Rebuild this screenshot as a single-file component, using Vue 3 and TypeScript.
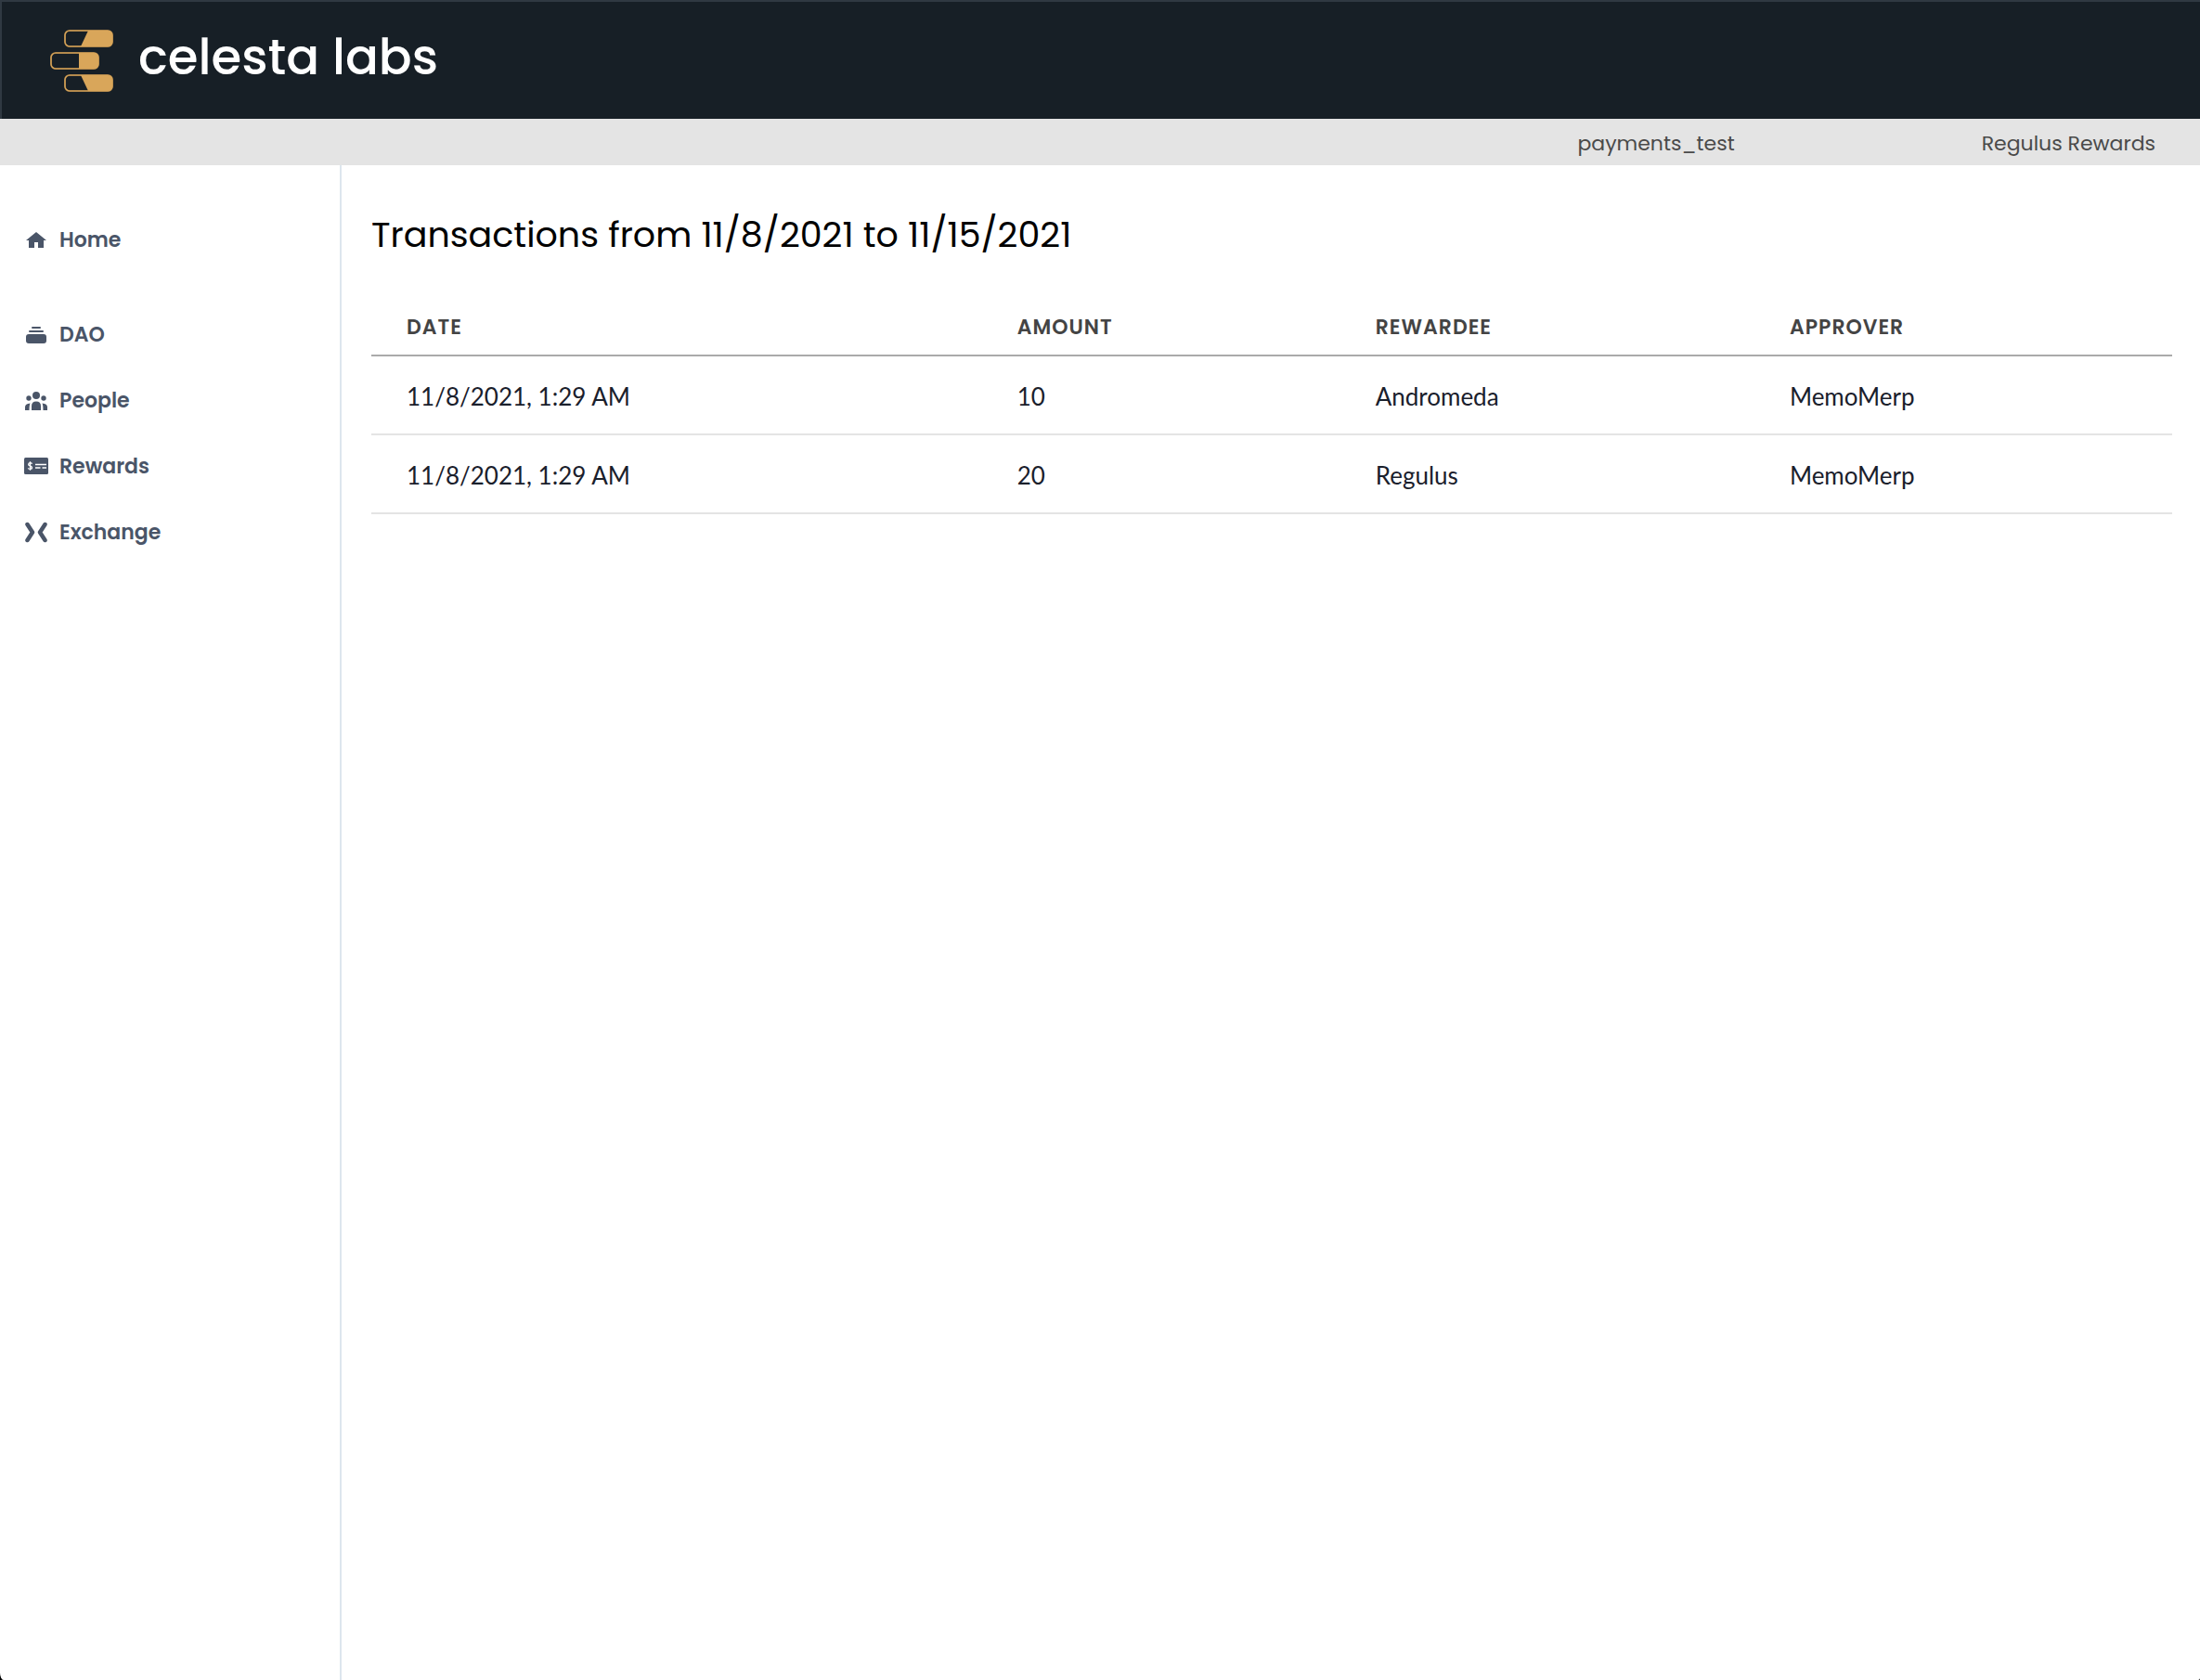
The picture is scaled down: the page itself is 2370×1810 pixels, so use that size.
<script setup lang="ts">
interface NavItem {
  label: string
  icon: 'home' | 'dao' | 'people' | 'rewards' | 'exchange'
}

interface Transaction {
  date: string
  amount: number
  rewardee: string
  approver: string
}

const navItems: NavItem[] = [
  { label: 'Home', icon: 'home' },
  { label: 'DAO', icon: 'dao' },
  { label: 'People', icon: 'people' },
  { label: 'Rewards', icon: 'rewards' },
  { label: 'Exchange', icon: 'exchange' },
]

const transactions: Transaction[] = [
  { date: '11/8/2021, 1:29 AM', amount: 10, rewardee: 'Andromeda', approver: 'MemoMerp' },
  { date: '11/8/2021, 1:29 AM', amount: 20, rewardee: 'Regulus', approver: 'MemoMerp' },
]
</script>

<template>
  <div class="app">
    <header class="topbar">
      <a href="#" class="brand">
        <svg class="logo" width="70" height="68" viewBox="0 0 70 68" aria-hidden="true">
          <g fill="none" stroke="#8f6f40" stroke-width="2">
            <rect x="17" y="1" width="51" height="17" rx="5" />
            <rect x="2" y="25" width="51" height="17" rx="5" />
            <rect x="17" y="49" width="51" height="17" rx="5" />
          </g>
          <g fill="#d9a65a">
            <path d="M42 1H63Q68 1 68 6V13Q68 18 63 18H34Z" />
            <path d="M32 25H48Q53 25 53 30V37Q53 42 48 42H32Z" />
            <path d="M34 49H63Q68 49 68 54V61Q68 66 63 66H42Z" />
          </g>
          <g fill="none" stroke="#d9a65a" stroke-width="1.200">
            <rect x="17" y="1" width="51" height="17" rx="5" />
            <rect x="2" y="25" width="51" height="17" rx="5" />
            <rect x="17" y="49" width="51" height="17" rx="5" />
          </g>
        </svg>
        <span class="brand-name">celesta labs</span>
      </a>
    </header>

    <div class="context">
      <span>payments_test</span>
      <span>Regulus Rewards</span>
    </div>

    <div class="body">
      <nav class="sidebar">
        <a v-for="item in navItems" :key="item.label" href="#" class="nav-link" :class="item.icon">
          <svg class="nav-icon" width="26" height="24" viewBox="0 0 26 24" fill="currentColor" aria-hidden="true">
            <path v-if="item.icon === 'home'" d="M13 3L24 12H21V20H15V14H11V20H5V12H2Z" />
            <template v-else-if="item.icon === 'dao'">
              <rect x="8" y="3" width="10" height="2" rx="1" />
              <rect x="5" y="7" width="16" height="2" rx="1" />
              <rect x="2" y="11" width="22" height="10" rx="3" />
            </template>
            <template v-else-if="item.icon === 'people'">
              <circle cx="13" cy="6" r="4" />
              <circle cx="5" cy="9" r="2.7" />
              <circle cx="21" cy="9" r="2.7" />
              <path d="M8 22V17.500Q8 12.500 13 12.500T18 17.500V22Z" />
              <path d="M1 22V18.500Q1 15 6.500 14.500Q5.500 16.500 5.500 22Z" />
              <path d="M25 22V18.500Q25 15 19.500 14.500Q20.500 16.500 20.500 22Z" />
            </template>
            <template v-else-if="item.icon === 'rewards'">
              <rect x="0" y="2" width="26" height="18" rx="1.500" />
              <g fill="none" stroke="#fff" stroke-width="1.300">
                <path d="M8.500 8.700Q8 7.600 6.500 7.600T4.600 9.300Q4.600 10.500 6.500 11T8.500 12.800Q8.500 14.400 6.500 14.400T4.400 13.200M6.500 6.300V15.700" />
                <path d="M12 9.500H24M12 13H17.500M19.500 13H24" />
              </g>
            </template>
            <path
              v-else
              d="M3.500 3L9 11.500L3.500 20M22.500 3L17 11.500L22.500 20"
              fill="none"
              stroke="currentColor"
              stroke-width="4.500"
              stroke-linecap="round"
              stroke-linejoin="round"
            />
          </svg>
          <span>{{ item.label }}</span>
        </a>
      </nav>

      <main class="content">
        <h1>Transactions from 11/8/2021 to 11/15/2021</h1>
        <table>
          <colgroup>
            <col class="col-date" />
            <col class="col-amount" />
            <col class="col-rewardee" />
            <col />
          </colgroup>
          <thead>
            <tr>
              <th scope="col">DATE</th>
              <th scope="col">AMOUNT</th>
              <th scope="col">REWARDEE</th>
              <th scope="col">APPROVER</th>
            </tr>
          </thead>
          <tbody>
            <tr v-for="(tx, i) in transactions" :key="i">
              <td>{{ tx.date }}</td>
              <td>{{ tx.amount }}</td>
              <td>{{ tx.rewardee }}</td>
              <td>{{ tx.approver }}</td>
            </tr>
          </tbody>
        </table>
      </main>
    </div>
  </div>
</template>

<style>
html {
  background: #000;
}
</style>

<style scoped>
.app {
  box-sizing: border-box;
  min-height: 100vh;
  display: flex;
  flex-direction: column;
  background: #fff;
  border-radius: 0 0 2px 4px / 0 0 2px 8px;
  overflow: hidden;
  font-family: Poppins, Inter, "Open Sans", sans-serif;
  text-rendering: optimizeLegibility;
}

.topbar {
  box-sizing: border-box;
  height: 128px;
  padding: 2px 51px 0;
  display: flex;
  align-items: center;
  background: #171f26;
  border-top: 2px solid #303942;
  border-left: 2px solid #303942;
}

.brand {
  display: flex;
  align-items: center;
  gap: 26px;
  color: #fff;
  text-decoration: none;
}

.brand-name {
  font-size: 53px;
  line-height: 64px;
  font-weight: 500;
  padding-bottom: 8px;
}

.context {
  display: flex;
  justify-content: flex-end;
  gap: 266px;
  padding: 12px 48px 8px;
  background: #e4e4e4;
  color: #4a4a4a;
  font-size: 22px;
  line-height: 30px;
}

.body {
  flex: 1;
  display: flex;
}

.sidebar {
  box-sizing: border-box;
  width: 368px;
  flex: none;
  display: flex;
  flex-direction: column;
  gap: 43px;
  padding: 67px 26px;
  border-right: 2px solid #dde6ee;
}

.nav-link {
  display: flex;
  align-items: center;
  gap: 12px;
  color: #4a5568;
  font-size: 22px;
  line-height: 28px;
  font-weight: 600;
  text-decoration: none;
}

.nav-link.home {
  margin-bottom: 31px;
}

.content {
  flex: 1;
  padding: 45px 30px 44px 32px;
}

h1 {
  margin: 0 0 48px;
  color: #000;
  font-size: 38px;
  line-height: 60px;
  font-weight: 400;
}

table {
  width: 100%;
  table-layout: fixed;
  border-collapse: separate;
  border-spacing: 0;
}

.col-date {
  width: 33.9%;
}

.col-amount {
  width: 19.9%;
}

.col-rewardee {
  width: 23%;
}

th,
td {
  padding: 0 38px;
  text-align: left;
}

th {
  padding-top: 4px;
  padding-bottom: 11px;
  border-bottom: 2px solid #aaa;
  color: #444;
  font-size: 22px;
  line-height: 36px;
  font-weight: 600;
  letter-spacing: 1px;
}

td {
  padding-top: 26px;
  padding-bottom: 22px;
  border-bottom: 2px solid #e4e4e4;
  color: #1a202c;
  font-family: Lato, sans-serif;
  font-size: 26px;
  line-height: 35px;
}
</style>
